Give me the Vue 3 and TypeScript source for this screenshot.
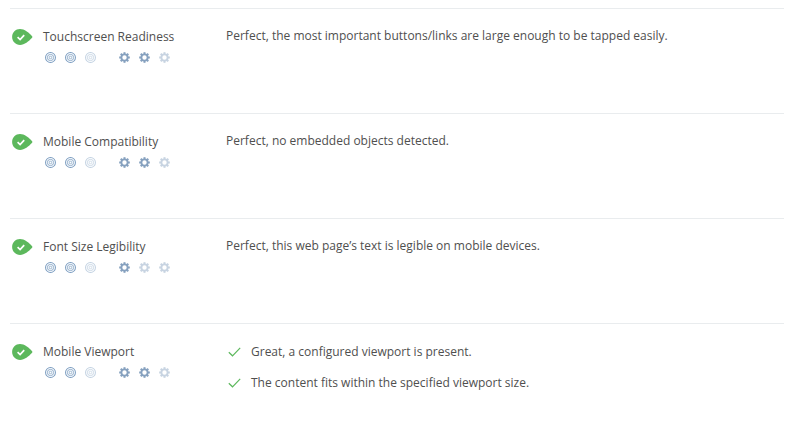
<script setup lang="ts">
interface Check {
  title: string
  gears: number
  lines: string[]
  ticks?: boolean
}

const checks: Check[] = [
  {
    title: 'Touchscreen Readiness',
    gears: 2,
    lines: ['Perfect, the most important buttons/links are large enough to be tapped easily.'],
  },
  { title: 'Mobile Compatibility', gears: 2, lines: ['Perfect, no embedded objects detected.'] },
  { title: 'Font Size Legibility', gears: 1, lines: ['Perfect, this web page’s text is legible on mobile devices.'] },
  {
    title: 'Mobile Viewport',
    gears: 2,
    ticks: true,
    lines: ['Great, a configured viewport is present.', 'The content fits within the specified viewport size.'],
  },
]

const gearTeeth = [0, 45, 90, 135, 180, 225, 270, 315]
</script>

<template>
  <div class="list">
    <section v-for="check in checks" :key="check.title" class="row">
      <svg class="badge" width="21" height="16" viewBox="0 0 21 16">
        <path d="M8 0.1C12.6 0.1 16.6 3.6 20.1 7.2Q20.8 8 20.1 8.8C16.6 12.4 12.6 15.9 8 15.9C3.6 15.9 0.1 12.4 0.1 8C0.1 3.6 3.6 0.1 8 0.1Z" fill="#5cb85c" />
        <path d="M5.6 8.2L8.1 10.6L12.2 6.1" fill="none" stroke="#fff" stroke-width="1.7" />
      </svg>
      <div class="side">
        <h3 class="title">{{ check.title }}</h3>
        <div class="ratings">
          <div class="icons">
            <svg v-for="n in 3" :key="n" class="icon" :class="{ off: n > 2 }" width="11" height="11" viewBox="0 0 12 12">
              <circle cx="6" cy="6" r="5.4" fill="none" stroke="#7a9cc0" stroke-width="1.1" />
              <circle cx="6" cy="6" r="3.4" fill="none" stroke="#7a9cc0" stroke-width="0.9" />
              <circle cx="6" cy="6" r="1.4" fill="none" stroke="#7a9cc0" stroke-width="0.8" />
            </svg>
          </div>
          <div class="icons">
            <svg v-for="n in 3" :key="n" class="icon" :class="{ off: n > check.gears }" width="11" height="11" viewBox="0 0 12 12">
              <rect
                v-for="deg in gearTeeth"
                :key="deg"
                x="4.9"
                y="0.2"
                width="2.2"
                height="2.6"
                fill="#86a1bf"
                :transform="`rotate(${deg} 6 6)`"
              />
              <circle cx="6" cy="6" r="3.4" fill="none" stroke="#86a1bf" stroke-width="2" />
            </svg>
          </div>
        </div>
      </div>
      <div class="result" :class="{ ticked: check.ticks }">
        <p v-for="line in check.lines" :key="line" class="line">
          <svg v-if="check.ticks" class="tick" width="13" height="10" viewBox="0 0 13 10">
            <path d="M0.8 5.2L4.5 8.8L12.2 0.8" fill="none" stroke="#5cb85c" stroke-width="1.2" />
          </svg>
          {{ line }}
        </p>
      </div>
    </section>
  </div>
</template>

<style scoped>
.list {
  padding: 8px 12px 0 10px;
  font-family: "Open Sans", sans-serif;
  color: #4f4f4f;
}

.row {
  display: flex;
  height: 105px;
  box-sizing: border-box;
  border-top: 1px solid #e9ecee;
  padding-top: 19px;
}

.badge {
  flex: none;
  margin: 1px 0 0 2px;
}

.side {
  width: 183px;
  flex: none;
  padding: 1px 0 0 10px;
}

.title {
  margin: 0;
  font-size: 12px;
  font-weight: 400;
  line-height: 16px;
}

.ratings {
  display: flex;
  gap: 23px;
  margin-top: 7px;
  padding-left: 2px;
}

.icons {
  display: flex;
  gap: 9px;
}

.icon.off {
  opacity: 0.45;
}

.result {
  flex: 1;
}

.result.ticked {
  padding: 1px 0 0 2px;
}

.line {
  display: flex;
  align-items: center;
  margin: 0 0 15px;
  font-size: 12px;
  line-height: 16px;
}

.tick {
  margin-right: 10px;
}
</style>
